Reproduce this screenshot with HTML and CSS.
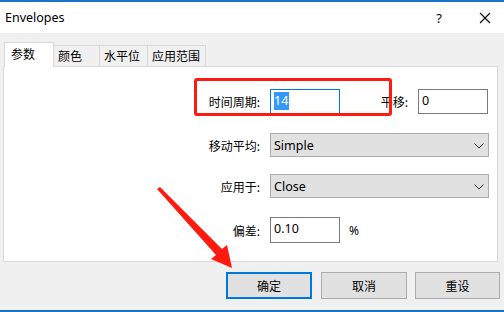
FILE: index.html
```html
<!DOCTYPE html>
<html>
<head>
<meta charset="utf-8">
<link rel="stylesheet" href="styles.css">
</head>
<body>
<div class="window">
  <div class="titlebar">
    <span class="title">Envelopes</span>
    <span class="help">?</span>
    <svg class="close" width="12" height="12" viewBox="0 0 12 12"><path d="M1 1L11 11M11 1L1 11" stroke="#000" stroke-width="1.1" fill="none"/></svg>
  </div>
  <div class="content">
    <div class="tabs">
      <div class="tab active">参数</div>
      <div class="tab">颜色</div>
      <div class="tab">水平位</div>
      <div class="tab">应用范围</div>
    </div>
    <div class="panel">
      <div class="row r1">
        <span class="label">时间周期:</span>
        <div class="input focus short"><span class="sel">14</span></div>
        <span class="label label2">平移:</span>
        <div class="input short">0</div>
      </div>
      <div class="row r2">
        <span class="label">移动平均:</span>
        <div class="select">Simple<svg class="chev" width="10" height="6" viewBox="0 0 10 6"><path d="M0.5 0.5L5 5L9.5 0.5" stroke="#333" stroke-width="1" fill="none"/></svg></div>
      </div>
      <div class="row r3">
        <span class="label">应用于:</span>
        <div class="select">Close<svg class="chev" width="10" height="6" viewBox="0 0 10 6"><path d="M0.5 0.5L5 5L9.5 0.5" stroke="#333" stroke-width="1" fill="none"/></svg></div>
      </div>
      <div class="row r4">
        <span class="label">偏差:</span>
        <div class="input short tall">0.10</div>
        <span class="pct">%</span>
      </div>
    </div>
    <div class="buttons">
      <div class="btn default">确定</div>
      <div class="btn">取消</div>
      <div class="btn last">重设</div>
    </div>
  </div>
</div>
<div class="redbox"></div>
<svg class="arrow" width="504" height="312" viewBox="0 0 504 312">
  <polygon points="157,189 160,187 222,249 227,245 232,268 211,259 216,255" fill="#ff1a0f"/>
</svg>
</body>
</html>
```

FILE: styles.css
```css
html, body {
  margin: 0;
  padding: 0;
}
body {
  width: 504px;
  height: 312px;
  overflow: hidden;
  background: #f0f0f0;
  font-family: "Noto Sans CJK SC", "Noto Sans", sans-serif;
  font-size: 12px;
  color: #000;
  position: relative;
}
.window {
  width: 504px;
  height: 312px;
  box-sizing: border-box;
  border-top: 2px solid #1b72c9;
  border-bottom: 2px solid #1b72c9;
  display: flex;
  flex-direction: column;
}
.titlebar {
  height: 31px;
  background: #fff;
  display: flex;
  align-items: center;
  padding-left: 5px;
  flex-shrink: 0;
}
.title {
  font-family: "Noto Sans", sans-serif;
  font-size: 12.5px;
  flex: 1;
}
.help {
  font-family: "Noto Sans", sans-serif;
  font-size: 13px;
  margin-right: 37px;
}
.close {
  margin-right: 13px;
}
.content {
  padding: 9px 6px 0 3px;
  flex: 1;
  display: flex;
  flex-direction: column;
}
.tabs {
  display: flex;
  align-items: flex-end;
  height: 24px;
  margin-left: 1px;
  position: relative;
  z-index: 1;
}
.tab {
  height: 21px;
  box-sizing: border-box;
  border: 1px solid #d9d9d9;
  border-bottom: none;
  border-left: none;
  background: #f0f0f0;
  line-height: 20px;
  padding: 0 0 0 4px;
}
.tab:nth-child(2) { width: 46px; }
.tab:nth-child(3) { width: 48px; }
.tab:nth-child(4) { width: 58px; }
.tab.active {
  width: 50px;
  height: 25px;
  margin-bottom: -1px;
  background: #fff;
  border-left: 1px solid #d9d9d9;
  padding-left: 6px;
  line-height: 21px;
}
.panel {
  height: 196px;
  box-sizing: border-box;
  background: #fff;
  border: 1px solid #d9d9d9;
  display: flex;
  flex-direction: column;
}
.row {
  display: flex;
  align-items: center;
}
.r1 { margin-top: 22px; }
.r2 { margin-top: 19px; }
.r3 { margin-top: 17px; }
.r4 { margin-top: 19px; }
.label {
  width: 256px;
  text-align: right;
  margin-right: 10px;
}
.label2 {
  width: 68px;
}
.input {
  height: 25px;
  box-sizing: border-box;
  border: 1px solid #7a7a7a;
  background: #fff;
  font-family: "Noto Sans", sans-serif;
  font-size: 12.5px;
  line-height: 21px;
  padding-left: 3px;
}
.input.short { width: 70px; }
.input.tall { height: 26px; line-height: 22px; }
.input.focus { border-color: #0078d7; }
.sel {
  background: #3399ff;
  color: #fff;
  padding: 0 1px 1px 0;
  display: inline-block;
  line-height: 17px;
}
.select {
  width: 219px;
  height: 24px;
  box-sizing: border-box;
  border: 1px solid #adadad;
  background: #e1e1e1;
  font-family: "Noto Sans", sans-serif;
  font-size: 12.5px;
  display: flex;
  align-items: center;
  justify-content: space-between;
  padding: 0 4px 0 3px;
}
.chev { margin-top: 1px; }
.pct {
  font-family: "Noto Sans", sans-serif;
  margin-left: 9px;
}
.buttons {
  display: flex;
  justify-content: flex-end;
  margin-top: 10px;
  margin-right: -2px;
}
.btn {
  width: 86px;
  height: 27px;
  box-sizing: border-box;
  border: 1px solid #adadad;
  background: #e1e1e1;
  display: flex;
  align-items: center;
  justify-content: center;
  margin-left: 9px;
}
.btn.last { margin-left: 8px; width: 85px; }
.btn.default { border: 2px solid #0078d7; }
.redbox {
  position: absolute;
  left: 194px;
  top: 78px;
  width: 198px;
  height: 38px;
  box-sizing: border-box;
  border: 3px solid #ff1a0f;
  border-radius: 3px;
}
.arrow {
  position: absolute;
  left: 0;
  top: 0;
}
```
